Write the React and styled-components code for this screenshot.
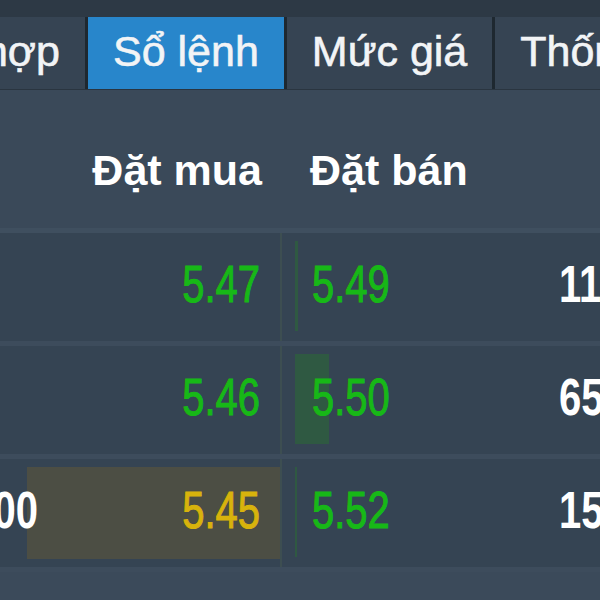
import styled, { createGlobalStyle } from 'styled-components';

const GlobalStyle = createGlobalStyle`
	html,
	body {
		margin: 0;
		padding: 0;
		background: #344352;
	}
`;

const Board = styled.div`
	width: 600px;
	height: 600px;
	overflow: hidden;
	background: #3b4a5a;
	font-family: 'Liberation Sans', Arial, sans-serif;
	display: flex;
	flex-direction: column;
`;

const TopStrip = styled.div`
	height: 17px;
	background: #2d3945;
	flex-shrink: 0;
`;

const TabBar = styled.div`
	height: 72px;
	display: flex;
	flex-shrink: 0;
	margin-left: -151px;
	background: #1e2830;
	gap: 3px;
	white-space: nowrap;
	border-bottom: 1px solid #2a3540;
`;

const Tab = styled.div`
	display: flex;
	align-items: center;
	padding: 0 25px 3px;
	font-size: 43px;
	color: #f2f4f6;
	background: ${({ $active }) => ($active ? '#2886cb' : '#364453')};
	-webkit-text-stroke: 0.6px #f2f4f6;
	flex-shrink: 0;
`;

const HeaderRow = styled.div`
	height: 143px;
	flex-shrink: 0;
	display: grid;
	grid-template-columns: 40px 240px 16px 1fr;
	align-items: center;
	background: #3a4959;
	border-bottom: 5px solid #3f4f5f;
	box-sizing: border-box;
	padding-top: 22px;
`;

const HeadCell = styled.div`
	font-size: 43px;
	font-weight: bold;
	color: #ffffff;
	text-align: ${({ $align }) => $align || 'left'};
	padding: ${({ $pad }) => $pad || '0'};
	white-space: nowrap;
`;

const Rows = styled.div`
	display: flex;
	flex-direction: column;
`;

const Row = styled.div`
	position: relative;
	height: 108px;
	display: grid;
	grid-template-columns: 40px 240px 16px 263px 1fr;
	align-items: center;
	background: #354453;
	border-bottom: 5px solid #3d4c5c;
	white-space: nowrap;
	overflow: hidden;
`;

const BidBar = styled.div`
	position: absolute;
	right: 320px;
	top: 8px;
	bottom: 8px;
	background: #4c4e44;
`;

const AskBar = styled.div`
	position: absolute;
	left: 295px;
	top: 8px;
	bottom: 10px;
	background: #2f5942;
`;

const Cell = styled.div`
	position: relative;
	display: flex;
	justify-content: ${({ $align }) => ($align === 'right' ? 'flex-end' : 'flex-start')};
	padding: ${({ $pad }) => $pad || '0'};
	height: 100%;
	align-items: center;
	box-sizing: border-box;
`;

const Divider = styled.div`
	height: 100%;
	border-left: 2px solid rgba(70, 90, 80, 0.45);
	box-sizing: border-box;
`;

const Num = styled.span`
	display: inline-block;
	font-size: 40px;
	line-height: 1;
	font-weight: ${({ $bold }) => ($bold ? 'bold' : 'normal')};
	color: ${({ $color }) => $color};
	-webkit-text-stroke: ${({ $bold }) => ($bold ? '0' : '0.8px')} ${({ $color }) => $color};
	transform: scaleY(1.3);
	margin-top: -6px;
`;

const Bottom = styled.div`
	flex: 1;
	background: #3b4a5a;
`;

const GREEN = '#17b817';
const YELLOW = '#d8b30c';

const rows = [
	{ bidVol: '', bid: '5.47', bidColor: GREEN, bidBar: 0, ask: '5.49', askBar: 3, askVol: '11' },
	{ bidVol: '', bid: '5.46', bidColor: GREEN, bidBar: 0, ask: '5.50', askBar: 34, askVol: '65' },
	{ bidVol: '00', bid: '5.45', bidColor: YELLOW, bidBar: 253, ask: '5.52', askBar: 2, askVol: '15' },
];

const App = () => {
	return (
		<>
			<GlobalStyle />
			<Board>
				<TopStrip />
				<TabBar>
					<Tab>Tổng hợp</Tab>
					<Tab $active>Sổ lệnh</Tab>
					<Tab>Mức giá</Tab>
					<Tab>Thống kê</Tab>
				</TabBar>
				<HeaderRow>
					<div />
					<HeadCell $align="right" $pad="0 18px 0 0">
						Đặt mua
					</HeadCell>
					<div />
					<HeadCell $pad="0 0 0 14px">Đặt bán</HeadCell>
				</HeaderRow>
				<Rows>
					{rows.map((r) => (
						<Row key={r.bid}>
							{r.bidBar > 0 && <BidBar style={{ width: r.bidBar }} />}
							{r.askBar > 0 && <AskBar style={{ width: r.askBar }} />}
							<Cell $align="right" $pad="0 2px 0 0">
								<Num $bold $color="#ffffff">
									{r.bidVol}
								</Num>
							</Cell>
							<Cell $align="right" $pad="0 20px 0 0">
								<Num $color={r.bidColor}>{r.bid}</Num>
							</Cell>
							<Divider />
							<Cell $pad="0 0 0 16px">
								<Num $color={GREEN}>{r.ask}</Num>
							</Cell>
							<Cell>
								<Num $bold $color="#ffffff">
									{r.askVol}0,500
								</Num>
							</Cell>
						</Row>
					))}
				</Rows>
				<Bottom />
			</Board>
		</>
	);
};

export default App;
